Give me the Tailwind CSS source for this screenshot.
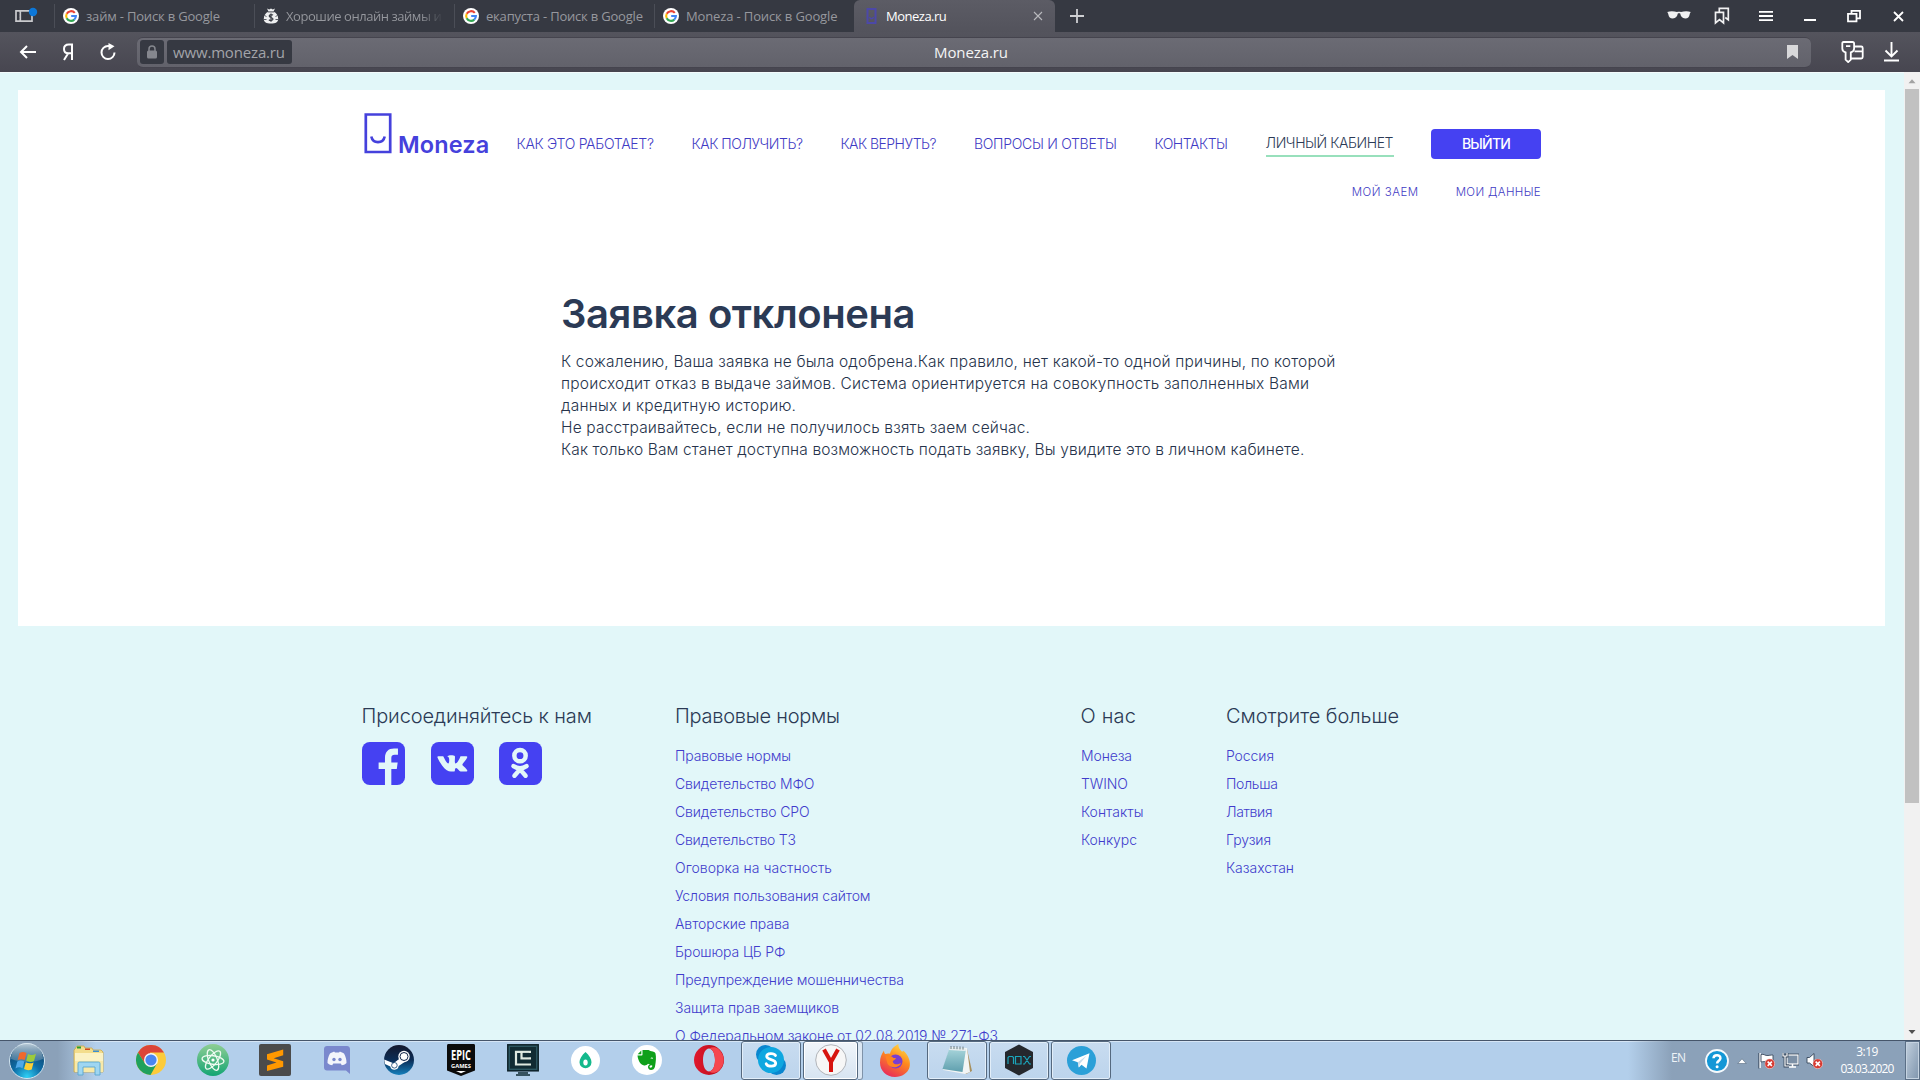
<!DOCTYPE html>
<html lang="ru">
<head>
<meta charset="utf-8">
<title>Moneza.ru</title>
<script src="https://cdn.jsdelivr.net/npm/@tailwindcss/browser@4"></script>
</head>
<body class="w-[1920px] h-[1080px] overflow-hidden flex flex-col bg-[#e2f7f9] font-['Inter',sans-serif]">

<!-- shared symbols -->
<svg class="hidden">
  <symbol id="google" viewBox="0 0 16 16">
    <circle cx="8" cy="8" r="8" fill="#fff"/>
    <g fill="none" stroke-width="2.1">
      <path d="M11.8 4.9A4.9 4.9 0 0 0 3.7 5.8" stroke="#ea4335"/>
      <path d="M3.75 5.7a4.9 4.9 0 0 0 0 4.6" stroke="#fbbc05"/>
      <path d="M3.7 10.2a4.9 4.9 0 0 0 7.6 1.4" stroke="#34a853"/>
      <path d="M8.2 8h4.7a4.9 4.9 0 0 1-1.7 3.7" stroke="#4285f4"/>
    </g>
  </symbol>
  <symbol id="denied" viewBox="0 0 10 10">
    <circle cx="5" cy="5" r="4.7" fill="#d63a32" stroke="#f3d5d3" stroke-width=".6"/>
    <path d="M3 3l4 4M7 3l-4 4" stroke="#fff" stroke-width="1.5"/>
  </symbol>
</svg>

<!-- tab strip -->
<div class="h-8 shrink-0 bg-[#363942] flex items-stretch font-['Open_Sans',sans-serif] text-[13px] text-[#96989e]">
  <div class="w-[54px] flex items-center pl-[14px]">
    <svg class="w-6 h-6" viewBox="0 0 24 24"><path d="M2 6.8h16v10.4H2zM6.3 7v10" fill="none" stroke="#c9cacd" stroke-width="1.7"/><path d="M3.2 9.5h2M3.2 12h2M3.2 14.500h2" stroke="#363942"/><circle cx="19" cy="8" r="4.2" fill="#0c77d8"/></svg>
  </div>
  <div class="w-[200px] flex items-center relative pl-[9px] gap-[7px]">
    <i class="absolute left-0 top-1 h-6 w-px bg-[#4b4e57]"></i>
    <svg class="w-4 h-4"><use href="#google"/></svg><span class="pt-px tracking-[-0.184px] whitespace-nowrap">займ - Поиск в Google</span>
  </div>
  <div class="w-[200px] flex items-center relative pl-[9px] gap-[7px]">
    <i class="absolute left-0 top-1 h-6 w-px bg-[#4b4e57]"></i>
    <svg class="w-4 h-4" viewBox="0 0 16 16"><path d="M4 .6l2.2 1L8 .4l1.800 1.200 2.200-1-1.500 3c3 1.500 4.700 4.400 4.700 7.200 0 3.400-2.500 4.800-7.200 4.800S.8 14.200.8 10.800c0-2.800 1.700-5.700 4.700-7.200z" fill="#eeeff0"/><path d="M4.800 3.900h6.400" stroke="#4a4d56"/><path d="M10 7.100C9 6.200 6.200 6.300 6.200 8c0 1.800 3.800 1.200 3.800 3.100 0 1.700-3 1.700-4.100.7M8 5.500v8.200" fill="none" stroke="#363942" stroke-width="1.200"/><path d="M1.500 7.500l2 1M1 11.500h2.500M14.500 7.500l-2 1M15 11.500h-2.500" stroke="#363942" stroke-width=".8"/></svg>
    <span class="pt-px tracking-[-0.45px] whitespace-nowrap w-[158px] overflow-hidden bg-gradient-to-r from-[#96989e] from-85% to-[#363942] bg-clip-text text-transparent">Хорошие онлайн займы и</span>
  </div>
  <div class="w-[200px] flex items-center relative pl-[9px] gap-[7px]">
    <i class="absolute left-0 top-1 h-6 w-px bg-[#4b4e57]"></i>
    <svg class="w-4 h-4"><use href="#google"/></svg><span class="pt-px tracking-[-0.199px] whitespace-nowrap">екапуста - Поиск в Google</span>
  </div>
  <div class="w-[200px] flex items-center relative pl-[9px] gap-[7px]">
    <i class="absolute left-0 top-1 h-6 w-px bg-[#4b4e57]"></i>
    <svg class="w-4 h-4"><use href="#google"/></svg><span class="pt-px tracking-[-0.136px] whitespace-nowrap">Moneza - Поиск в Google</span>
  </div>
  <div class="w-[201px] flex items-center rounded-t-[6px] bg-gradient-to-b from-[#5c5c65] to-[#53535c] pl-3 text-white">
    <svg class="w-[11px] h-4" viewBox="0 0 11 16"><path d="M1.500 1h8v14h-8z" fill="none" stroke="#4c48a8" stroke-width="2"/><path d="M3.500 9c1 2.300 3 2.300 4 0" fill="none" stroke="#4c48a8" stroke-width="1.500"/></svg>
    <span class="pt-px ml-[9px] w-[147px] tracking-[-0.5px]">Moneza.ru</span>
    <svg class="w-[10px] h-[10px]" viewBox="0 0 10 10"><path d="M1 1l8 8M9 1L1 9" stroke="#b9babe" stroke-width="1.100"/></svg>
  </div>
  <div class="flex items-center pl-[15px]">
    <svg class="w-[14px] h-[14px]" viewBox="0 0 14 14"><path d="M7 0v14M0 7h14" stroke="#cfd0d3" stroke-width="1.800"/></svg>
  </div>
  <div class="ml-auto flex items-center mr-[16px]">
    <svg class="w-6 h-6 mr-[22px]" viewBox="0 0 24 24"><path d="M.3 8c3-.9 6.600-.8 9.700.1 1.300-.4 2.700-.4 4 0 3.100-.9 6.700-1 9.700-.1-.3.900-.8 1.200-1 2.200-.6 3-1.800 4.300-4.500 4.300-3 0-4.500-1.800-5-4.900-.6-.4-1.800-.4-2.400 0-.5 3.100-2 4.900-5 4.900-2.700 0-3.900-1.300-4.500-4.300-.2-1-.7-1.300-1-2.200z" fill="#f1f1f2"/></svg>
    <svg class="w-[18px] h-[18px] mr-[28px]" viewBox="0 0 18 18" fill="none" stroke="#f1f1f2" stroke-width="1.700"><path d="M2.500 5.300h8v10.700l-4-3.300-4 3.300zM6.300 5V1.300h9v11.500l-3-2.300"/></svg>
    <svg class="w-[14px] h-4 mr-[31px]" viewBox="0 0 14 16"><path d="M0 3.800h14M0 8h14M0 12.200h14" stroke="#fff" stroke-width="1.800"/></svg>
    <svg class="w-3 h-4 mr-[31px]" viewBox="0 0 12 16"><path d="M0 12h12" stroke="#fff" stroke-width="2"/></svg>
    <svg class="w-[14px] h-[14px] mr-8" viewBox="0 0 14 14" fill="none" stroke="#fff" stroke-width="1.800"><path d="M1 4.800h8.500v7.500H1zM4.500 4.500V1.800H13v7.500H10"/></svg>
    <svg class="w-[11px] h-[11px]" viewBox="0 0 11 11"><path d="M1 1l9 9M10 1l-9 9" stroke="#fff" stroke-width="1.800"/></svg>
  </div>
</div>

<!-- address toolbar -->
<div class="h-10 shrink-0 bg-gradient-to-b from-[#54545d] to-[#474650] flex items-center font-['Open_Sans',sans-serif]">
  <div class="w-[137px] flex items-center pl-[19px] text-white">
    <svg class="w-[18px] h-[14px]" viewBox="0 0 18 14"><path d="M8 1L2 7l6 6M2 7h15" fill="none" stroke="#fff" stroke-width="2"/></svg>
    <svg class="w-3 h-[18px] ml-[25px]" viewBox="0 0 12 18"><path d="M10 17V1.500H6.800C3.500 1.500 2 3.500 2 6s1.500 4.300 4.300 4.300H10M6.200 10.300L2 17" fill="none" stroke="#fff" stroke-width="2"/></svg>
    <svg class="w-[18px] h-[18px] ml-[25px]" viewBox="0 0 18 18"><path d="M15.500 9.500A6.500 6.500 0 1 1 9 3h3.500" fill="none" stroke="#fff" stroke-width="2"/><path d="M9.500 0l6 3.300-6 4z" fill="#fff"/></svg>
  </div>
  <div class="w-[1674px] h-[31px] rounded-[6px] bg-gradient-to-b from-[#6b6b74] to-[#62626b] border-y border-[#45444e] flex items-center pl-[3px] pr-[13px] relative">
    <div class="w-6 h-6 rounded-[3px] bg-[#363942] flex items-center justify-center">
      <svg class="w-[10px] h-[14px]" viewBox="0 0 10 14"><path d="M2 6V4a3 3 0 0 1 6 0v2" fill="none" stroke="#85878e" stroke-width="1.500"/><rect y="5.500" width="10" height="8" rx="1.500" fill="#85878e"/></svg>
    </div>
    <div class="ml-[3px] w-[125px] h-6 rounded-[3px] bg-[#363942] flex items-center pl-[6px] text-[15px] tracking-[-0.165px] text-[#a2a4a9]">www.moneza.ru</div>
    <div class="ml-[642px] text-[15px] tracking-[-0.098px] text-[#f4f4f5]">Moneza.ru</div>
    <svg class="ml-auto w-[11px] h-[14px]" viewBox="0 0 11 14"><path d="M0 0h11v14l-5.500-4L0 14z" fill="#d8d8da"/></svg>
  </div>
  <svg class="ml-[30px] w-[23px] h-[22px]" viewBox="0 0 23 22" fill="none" stroke="#fff" stroke-width="1.800"><path d="M2.500 1h9c1 0 1.600.6 1.600 1.600v4.900c0 2-1.300 3.300-3.300 3.900v7.300l-2.600 2.400-2.600-2.400v-7.300C2.600 10.800 1.300 9.500 1.300 7.500V2.600C1.300 1.500 1.700 1 2.500 1zM5 5.200h4.300"/><path d="M13.500 5.500h6.700c1 0 1.500.5 1.500 1.500v9c0 1-.5 1.500-1.500 1.500H10M13.500 10.300h8"/></svg>
  <svg class="ml-[20px] w-[15px] h-[20px]" viewBox="0 0 15 20" fill="none" stroke="#fff" stroke-width="1.900"><path d="M7.500 0v14M1.500 8.500l6 6 6-6M0 18.500h15"/></svg>
</div>

<!-- viewport -->
<div class="h-[968px] shrink-0 flex overflow-hidden">
  <div class="w-[1904px] pt-[17px] border-t border-[#f3fbfc]">
    <main class="ml-[18px] w-[1867px] h-[536px] bg-white">
      <header class="flex h-[91px] pl-[346px]">
        <div class="flex items-end w-[152.500px] pb-[26px]">
          <svg class="w-7 h-[41px] mb-[1px]" viewBox="0 0 28 41" fill="none" stroke="#4541dc"><path d="M1.800 1.500h24.400v37.500H1.800z" stroke-width="2.700"/><path d="M7.300 23.500c1.500 7.500 11.900 7.500 13.400 0" stroke-width="2.600"/></svg>
          <span class="ml-[6px] text-[23.5px] leading-[24px] font-semibold tracking-[0.1px] text-[#4541dc] translate-y-[2px]">Moneza</span>
        </div>
        <div class="flex flex-col">
          <nav class="flex items-center h-[30px] mt-[39px] text-[14px] leading-[20px] font-light text-[#3f3bc4] whitespace-nowrap">
            <a class="w-[175px] tracking-[-0.288px]">КАК ЭТО РАБОТАЕТ?</a>
            <a class="w-[149px] tracking-[-0.461px]">КАК ПОЛУЧИТЬ?</a>
            <a class="w-[133.500px] tracking-[-0.543px]">КАК ВЕРНУТЬ?</a>
            <a class="w-[180.500px] tracking-[-0.296px]">ВОПРОСЫ И ОТВЕТЫ</a>
            <a class="w-[111px] tracking-[-0.475px]">КОНТАКТЫ</a>
            <span class="w-[165.500px]"><a class="block w-32 h-[26px] pt-[2px] border-b-2 border-[#98e0bc] tracking-[-0.428px] text-[#2b3a55]">ЛИЧНЫЙ КАБИНЕТ</a></span>
            <a class="w-[110px] h-[30px] rounded-[4px] bg-[#4541f2] text-white font-medium tracking-[-0.762px] flex items-center justify-center">ВЫЙТИ</a>
          </nav>
          <nav class="flex justify-end gap-[37px] mt-[24px] h-[18px] leading-[18px] text-[11.5px] font-light text-[#3f3bc4] whitespace-nowrap">
            <a class="tracking-[0.5px]">МОЙ ЗАЕМ</a>
            <a class="tracking-[0.349px]">МОИ ДАННЫЕ</a>
          </nav>
        </div>
      </header>
      <section class="ml-[543px] pt-[109px] text-[#2b3a55]">
        <h1 class="text-[40px] leading-[48px] font-semibold tracking-[-0.43px]">Заявка отклонена</h1>
        <p class="mt-[13px] text-[15.5px] leading-[22px] font-light whitespace-nowrap text-[#26334b]">
          <span class="tracking-[0.178px]">К сожалению, Ваша заявка не была одобрена.Как правило, нет какой-то одной причины, по которой</span><br>
          <span class="tracking-[0.204px]">происходит отказ в выдаче займов. Система ориентируется на совокупность заполненных Вами</span><br>
          <span class="tracking-[0.231px]">данных и кредитную историю.</span><br>
          <span class="tracking-[0.167px]">Не расстраивайтесь, если не получилось взять заем сейчас.</span><br>
          <span class="tracking-[0.123px]">Как только Вам станет доступна возможность подать заявку, Вы увидите это в личном кабинете.</span>
        </p>
      </section>
    </main>

    <footer class="flex items-start pl-[361px] pt-[77px] text-[14px] leading-7 font-light text-[#413ccc] whitespace-nowrap">
      <div class="w-[314px]">
        <h2 class="text-[20px] leading-[26px] tracking-[-0.13px] text-[#2b3a55] pl-[0.500px]">Присоединяйтесь к нам</h2>
        <div class="flex gap-[25px] mt-[13px] pl-px">
          <svg class="w-[43px] h-[43px]" viewBox="0 0 44 44"><rect width="44" height="44" rx="8" fill="#4541f2"/><path d="M23.500 44V27.500H17V21h6.500v-4.500c0-6.500 3.500-9.800 9.300-9.800h4V13h-3.300c-2.800 0-3.500 1.300-3.500 3.700V21H36.500l-.9 6.500H30V44z" fill="#e2f7f9"/></svg>
          <svg class="w-[43px] h-[43px] ml-px" viewBox="0 0 44 44"><rect width="44" height="44" rx="8" fill="#4541f2"/><path transform="translate(6.500 7.500) scale(1.280 1.200)" d="M13.162 18.994c.609 0 .858-.406.851-.915-.031-1.917.714-2.949 2.059-1.604 1.488 1.488 1.796 2.519 3.603 2.519h3.200c.808 0 1.126-.26 1.126-.668 0-.863-1.421-2.386-2.625-3.504-1.686-1.565-1.765-1.602-.313-3.486 1.801-2.339 4.157-5.336 2.073-5.336h-3.981c-.772 0-.828.435-1.103 1.083-.995 2.347-2.886 5.387-3.604 4.922-.751-.485-.407-2.406-.35-5.261.015-.754.011-1.271-1.141-1.539-.629-.145-1.241-.205-1.809-.205-2.273 0-3.841.953-2.950 1.119 1.571.293 1.420 3.692 1.054 5.160-.638 2.556-3.036-2.024-4.035-4.305-.241-.548-.315-.974-1.175-.974h-3.255c-.492 0-.787.16-.787.516 0 .602 2.960 6.720 5.786 9.770 2.756 2.975 5.480 2.708 7.376 2.708z" fill="#e2f7f9"/></svg>
          <svg class="w-[43px] h-[43px]" viewBox="0 0 44 44" fill="none" stroke="#e2f7f9" stroke-width="4.600" stroke-linecap="round" stroke-linejoin="round"><rect width="44" height="44" rx="8" fill="#4541f2" stroke="none"/><circle cx="21.500" cy="14" r="5.800"/><path d="M14.800 24.700c4.200 2.900 9.200 2.900 13.400 0M21.500 28l-5.700 6.500M21.500 28l5.700 6.500"/></svg>
        </div>
      </div>
      <div class="w-[406px]">
        <h2 class="text-[20px] leading-[26px] tracking-[-0.252px] text-[#2b3a55] mb-[13px]">Правовые нормы</h2>
        <ul>
          <li class="tracking-[-0.138px]">Правовые нормы</li>
          <li class="tracking-[-0.127px]">Свидетельство МФО</li>
          <li class="tracking-[-0.122px]">Свидетельство СРО</li>
          <li class="tracking-[-0.216px]">Свидетельство ТЗ</li>
          <li class="tracking-[0.041px]">Оговорка на частность</li>
          <li class="tracking-[-0.117px]">Условия пользования сайтом</li>
          <li class="tracking-[-0.056px]">Авторские права</li>
          <li class="tracking-[-0.112px]">Брошюра ЦБ РФ</li>
          <li class="tracking-[-0.125px]">Предупреждение мошенничества</li>
          <li class="tracking-[-0.094px]">Защита прав заемщиков</li>
          <li class="tracking-[-0.078px]">О Федеральном законе от 02.08.2019 № 271-ФЗ</li>
        </ul>
      </div>
      <div class="w-[145px]">
        <h2 class="text-[20px] leading-[26px] tracking-[0.215px] text-[#2b3a55] mb-[13px] -ml-[0.500px]">О нас</h2>
        <ul>
          <li class="tracking-[-0.131px]">Монеза</li>
          <li class="tracking-[-0.090px]">TWINO</li>
          <li>Контакты</li>
          <li class="tracking-[-0.068px]">Конкурс</li>
        </ul>
      </div>
      <div>
        <h2 class="text-[20px] leading-[26px] tracking-[-0.05px] text-[#2b3a55] mb-[13px]">Смотрите больше</h2>
        <ul>
          <li class="tracking-[-0.091px]">Россия</li>
          <li class="tracking-[-0.253px]">Польша</li>
          <li class="tracking-[-0.347px]">Латвия</li>
          <li class="tracking-[-0.100px]">Грузия</li>
          <li class="tracking-[-0.045px]">Казахстан</li>
        </ul>
      </div>
    </footer>
  </div>
  <div class="w-4 bg-[#f1f1f1] flex flex-col items-center">
    <svg class="w-4 h-[17px]" viewBox="0 0 16 16"><path d="M8 6.800l3.500 4h-7z" fill="#a3a3a3"/></svg>
    <div class="w-[14px] h-[714px] bg-[#c1c1c1]"></div>
    <svg class="w-4 h-4 mt-auto" viewBox="0 0 16 16"><path d="M8 10l3.500-4h-7z" fill="#505050"/></svg>
  </div>
</div>

<!-- taskbar -->
<div class="h-10 shrink-0 bg-[#b3cfeb] border-t border-[#46566b] flex items-stretch relative shadow-[inset_0_1px_0_#d5e5f5]">
  <div class="w-[96px] -mr-[38px] pl-2 flex items-center bg-gradient-to-r from-[#8ba1b9] from-60% to-[#8ba1b9]/0">
    <svg class="w-[38px] h-[38px]" viewBox="0 0 38 38">
      <defs><radialGradient id="orb" cx=".5" cy=".95" r=".9"><stop offset="0" stop-color="#2fd0f5"/><stop offset=".45" stop-color="#0d6ea8"/><stop offset="1" stop-color="#123f66"/></radialGradient><linearGradient id="shine" x2="0" y2="1"><stop stop-color="#dbe8f0" stop-opacity=".85"/><stop offset="1" stop-color="#7f9db4" stop-opacity=".4"/></linearGradient></defs>
      <circle cx="19" cy="19" r="17.500" fill="url(#orb)" stroke="#d3e4ef" stroke-width="1"/>
      <path d="M3 17a16 16 0 0 1 32 0c-9 4-22 4-32 0z" fill="url(#shine)"/>
      <path d="M11.500 11c2.500-1.300 4.500-1.300 7 .1l-1.800 7c-2.300-1.300-4.500-1.200-7 0z" fill="#f0692c"/>
      <path d="M20 12c2.500 1.400 5 1.300 8-.2l-2 7.200c-2.600 1.300-5.200 1.300-7.800-.2z" fill="#9ccb3c"/>
      <path d="M9.300 19.500c2.300-1.300 4.600-1.300 7 0l-1.800 6.800c-2.300-1.300-4.400-1.200-7 .1z" fill="#4fa8e8"/>
      <path d="M17.800 20.200c2.500 1.400 5 1.400 7.800.2l-1.900 7c-2.500 1.200-5 1.100-7.700-.3z" fill="#fccf35"/>
    </svg>
  </div>
  <div class="w-[62px] pb-px flex items-center justify-center z-10"><svg class="w-8 h-8" viewBox="0 0 32 32"><path d="M2 5l2-3h7l1 2h7l1 2h8l2 2v20H1V6z" fill="#f3dd8c" stroke="#c9a94e" stroke-width=".8"/><path d="M4 2.500h4v2H4z" fill="#2a9d2e"/><path d="M12 4.500h5v1.500h-5z" fill="#d1481f"/><path d="M20 6.500h6V8h-6z" fill="#3b8fd0"/><path d="M2 9h28v19H2z" fill="#f8e9a8"/><path d="M2 9h28v8H2z" fill="#fbf2c4"/><path d="M5 31V19.500c0-1 .5-1.500 1.500-1.500h19c1 0 1.500.5 1.500 1.500V31h-5v-8H10v8z" fill="#9fd6f1" stroke="#5aa6cf" stroke-width=".9"/></svg></div>
  <div class="w-[62px] pb-px flex items-center justify-center"><svg class="w-[30px] h-[30px]" viewBox="0 0 30 30"><circle cx="15" cy="15" r="15" fill="#fccb3a"/><path d="M2 7.500l7 11 6-3.500-1-7.500L28 7.500A15 15 0 0 0 2 7.500z" fill="#db4437"/><path d="M2 7.500A15 15 0 0 0 14.500 30l6.500-11.500-12 0z" fill="#1fa15d"/><circle cx="15" cy="15" r="7" fill="#f4f5f6"/><circle cx="15" cy="15" r="5.600" fill="#4a86f0"/></svg></div>
  <div class="w-[62px] pb-px flex items-center justify-center"><svg class="w-8 h-8" viewBox="0 0 32 32"><defs><linearGradient id="atom" x2="0" y2="1"><stop stop-color="#8fce94"/><stop offset="1" stop-color="#14a573"/></linearGradient></defs><circle cx="16" cy="16" r="16" fill="url(#atom)"/><g fill="none" stroke="#eefaf1" stroke-width="1.300"><ellipse cx="16" cy="16" rx="11" ry="4.300" transform="rotate(8 16 16)"/><ellipse cx="16" cy="16" rx="11" ry="4.300" transform="rotate(68 16 16)"/><ellipse cx="16" cy="16" rx="11" ry="4.300" transform="rotate(128 16 16)"/></g><circle cx="16" cy="16" r="1.600" fill="#fff"/></svg></div>
  <div class="w-[62px] pb-px flex items-center justify-center"><svg class="w-8 h-8" viewBox="0 0 32 32"><rect width="32" height="32" rx="2" fill="#4b4b4b"/><path d="M24.200 5.500v5.800l-9.500 3 9.500 2.900v5.500L8 27v-5.600l9.500-3L8 15.500v-5.200z" fill="#ff9800"/></svg></div>
  <div class="w-[62px] pb-px flex items-center justify-center"><svg class="w-[26px] h-7" viewBox="0 0 26 28"><path d="M3 0h20c1.700 0 3 1.300 3 3v25l-4-3.500H3c-1.700 0-3-1.300-3-3V3c0-1.700 1.300-3 3-3z" fill="#7a88cd"/><path d="M6 7.500c2-1.500 4-1.900 4.500-1.800l.4.900h4.200l.4-.9c.5-.1 2.500.3 4.500 1.800 1.700 3 2.600 6.200 2.500 9.500-1.600 1.700-3.300 2.200-4.700 2.200l-1.100-1.700H9.300l-1.100 1.700c-1.400 0-3.100-.5-4.700-2.200-.1-3.300.8-6.500 2.500-9.500z" fill="#f4f5fb"/><circle cx="10" cy="13.500" r="1.700" fill="#7a88cd"/><circle cx="16" cy="13.500" r="1.700" fill="#7a88cd"/></svg></div>
  <div class="w-[62px] pb-px flex items-center justify-center"><svg class="w-[30px] h-[30px]" viewBox="0 0 30 30"><defs><linearGradient id="steam" x2="0" y2="1"><stop stop-color="#14172c"/><stop offset=".5" stop-color="#0b2d56"/><stop offset="1" stop-color="#1480bd"/></linearGradient></defs><circle cx="15" cy="15" r="15" fill="url(#steam)"/><path d="M.2 14.500l9.300 3.800 6-4.500 5.500 3-6.300 4.200a4.300 4.300 0 0 1-8.400.5L.9 19z" fill="#fff"/><circle cx="20" cy="11.500" r="5.700" fill="#fff"/><circle cx="20" cy="11.500" r="4" fill="none" stroke="#12264a" stroke-width="1"/><circle cx="10.400" cy="20.300" r="2.800" fill="none" stroke="#12446f" stroke-width=".8"/></svg></div>
  <div class="w-[62px] pb-px flex items-center justify-center"><svg class="w-7 h-8 overflow-visible" viewBox="0 0 28 32"><path d="M1.500 0h25c1 0 1.500.6 1.500 1.500v25L14 32 0 26.500v-25C0 .6.500 0 1.500 0z" fill="#0b0b0b"/><text x="14" y="15.500" text-anchor="middle" textLength="20" lengthAdjust="spacingAndGlyphs" font-family="Open Sans" font-weight="700" font-size="15" fill="#fff">EPIC</text><text x="14" y="23.500" text-anchor="middle" textLength="20" lengthAdjust="spacingAndGlyphs" font-family="Open Sans" font-weight="700" font-size="6" fill="#fff">GAMES</text><path d="M9 27h10l-5 2.300z" fill="#fff"/></svg></div>
  <div class="w-[62px] pb-px flex items-center justify-center"><svg class="w-8 h-8" viewBox="0 0 32 32"><rect x=".8" y=".8" width="30.400" height="26" fill="#2c5660" stroke="#0d2229" stroke-width="1.500"/><rect x="3" y="3" width="26" height="21.600" fill="#112b33"/><path d="M24 7.800H9v12.700h15M14.500 8v6.300H24" fill="none" stroke="#dfe9e0" stroke-width="2.200"/><path d="M16 8.900h6v4.200h-6z" fill="#112b33"/><path d="M11 29h10M9 31h14" stroke="#112b33" stroke-width="1.600"/></svg></div>
  <div class="w-[62px] pb-px flex items-center justify-center"><svg class="w-[29px] h-[29px]" viewBox="0 0 29 29"><circle cx="14.500" cy="14.500" r="14.500" fill="#fff"/><path d="M14.500 6c3.800 3.500 6 6.900 6 10.200a6 6 0 0 1-12 0c0-3.300 2.200-6.700 6-10.200z" fill="#14b98c"/><ellipse cx="14.500" cy="16.500" rx="2.200" ry="3" fill="#fff"/></svg></div>
  <div class="w-[62px] pb-px flex items-center justify-center"><svg class="w-[30px] h-[30px]" viewBox="0 0 30 30"><circle cx="15" cy="15" r="15" fill="#fff"/><path d="M10.500 5h6c1 .5 1.500 1 3 1.300 2 .4 3.500.7 4 2.200.8 3.500.5 8-.5 13-.5 2.500-2 3.500-4 3.500s-3-1.500-3-3 1-2.500 2.500-2.500v1.600c-.8 0-1.200.5-.9 1.200.8.8 2.600.4 2.800-1.500-1.500-.8-3-1-4.400-2-1 1.500-3 2-4.500 1.500C8 19.500 6 15 5.500 10.500h4.200c.6 0 .8-.3.800-.9z" fill="#0fa01a"/><path d="M5.700 9.300L9.300 5.500v3.800z" fill="#0fa01a"/><path d="M18.500 13.700c.3-1.500 2.300-1.500 2.600.2-1-.3-1.700-.4-2.600-.2z" fill="#fff"/></svg></div>
  <div class="w-[62px] pb-px flex items-center justify-center"><svg class="w-[30px] h-[30px]" viewBox="0 0 30 30"><defs><linearGradient id="opera"><stop stop-color="#e0182d"/><stop offset="1" stop-color="#b30a18"/></linearGradient></defs><path fill-rule="evenodd" d="M15 0a15 15 0 1 0 0 30 15 15 0 0 0 0-30zm0 3.500c3.500 0 6 5 6 11.500s-2.500 11.500-6 11.500S9 21.500 9 15 11.500 3.500 15 3.500z" fill="url(#opera)"/><path d="M15 3.500c3.500 0 6 5 6 11.500s-2.500 11.500-6 11.500c3 2 7 1.500 9.500-.5 7-6 7-16 0-22C22 1.800 18 1.500 15 3.500z" fill="#f5474f"/></svg></div>
  <div class="w-[63px] flex items-center justify-center pr-px"><div class="w-[60px] h-[39px] rounded-[3px] border border-[#55697f] bg-gradient-to-b from-[#c8dcf0] to-[#bcd4ec] shadow-[inset_0_0_0_1px_#e2eef9] flex items-center justify-center pb-px"><svg class="w-[30px] h-[30px]" viewBox="0 0 30 30"><circle cx="9.500" cy="9.500" r="9.500" fill="#0a86cf"/><circle cx="20.500" cy="20.500" r="9.500" fill="#0a86cf"/><circle cx="15" cy="15" r="13" fill="#0fa7e0"/><path d="M19.500 10.500c-1.500-2.700-8.800-2.700-8.800.8 0 4.200 9 2.500 9 7 0 3.900-8 3.600-9.500.5" fill="none" stroke="#fff" stroke-width="2.800" stroke-linecap="round"/></svg></div></div>
  <div class="w-[61px] flex items-center"><div class="w-[55px] h-[39px] rounded-[3px] border border-[#55697f] bg-gradient-to-b from-[#f0f5fa] to-[#d7e4f1] shadow-[inset_0_0_0_1px_#fff] flex items-center justify-center pb-px"><svg class="w-8 h-8" viewBox="0 0 32 32"><circle cx="16" cy="16" r="15.300" fill="#f7f7f7" stroke="#a9adb2" stroke-width=".9"/><path d="M16 28V17.500M16 18L9 5.500M16 18l7-12.500" fill="none" stroke="#d7140f" stroke-width="4"/></svg></div><div class="w-[5px] h-[39px] rounded-r-[3px] border-y border-r border-[#7f93a9] bg-[#dbe7f3]"></div></div>
  <div class="w-[62px] flex items-center justify-center"><svg class="w-8 h-[39px]" viewBox="0 0 32 39"><defs><linearGradient id="fox" x1=".8" x2=".3" y2="1"><stop stop-color="#ffe14a"/><stop offset=".45" stop-color="#ff8a1d"/><stop offset="1" stop-color="#e82a5c"/></linearGradient></defs><path d="M19.500 3c-.5 3 1 5 3 7.300 1 .5 1.500.3 2-.5 5 4.500 7.500 11 6 16.500C29 32 23 36 16 36 7 36 1 29.500 1 21.500 1 16.500 2.500 13 5 9.500c0 1.500.3 2.500 1.200 3.600C8 12.500 9.500 12.300 11 12.700 12 8 15.500 5 19.500 3z" fill="url(#fox)"/><circle cx="16.500" cy="20.500" r="7" fill="#7a3ed0"/><path d="M6.500 15.500c3-1.500 6-.5 8 1.500h2.500c-.5 2-3 2.300-3.300 3.500.8 3.500 5.800 3.500 8.300 1.300-1 5-10 6.500-13.500 1z" fill="#ff8420"/></svg></div>
  <div class="w-[62px] flex items-center justify-center"><div class="w-[60px] h-[39px] rounded-[3px] border border-[#55697f] bg-gradient-to-b from-[#c8dcf0] to-[#bcd4ec] shadow-[inset_0_0_0_1px_#e2eef9] flex items-center justify-center pb-px"><svg class="w-8 h-8" viewBox="0 0 32 32"><defs><linearGradient id="pad" x2="0" y2="1"><stop stop-color="#a9d6dc"/><stop offset="1" stop-color="#5f9fae"/></linearGradient></defs><path d="M26 5l5 22-6 3-4-3z" fill="#a78f5c"/><path d="M9 3l17 1 3 24-5 2L2 26z" fill="#f2f5f5"/><path d="M8.500 4L25 5l-3.500 23L1.500 25z" fill="url(#pad)"/><path d="M8.500 4L25 5l-.3 2L8 6z" fill="#e9eef0"/><path d="M10 2v3M13 2v3M16 2.200v3M19 2.400v3M22 2.600v3" stroke="#6d7b80" stroke-width="1"/></svg></div></div>
  <div class="w-[62px] flex items-center justify-center"><div class="w-[60px] h-[39px] rounded-[3px] border border-[#55697f] bg-gradient-to-b from-[#c8dcf0] to-[#bcd4ec] shadow-[inset_0_0_0_1px_#e2eef9] flex items-center justify-center pb-px"><svg class="w-[30px] h-[32px]" viewBox="0 0 30 32"><path d="M15 .5L29 8v16l-14 7.500L1 24V8z" fill="#25282d"/><path d="M4 20v-6.500l1-1h3.500l1 1V20M11.500 12.500H17V20h-5.500zM19 12.500h1.500L25.500 20H27M19 20h1.500l5-7.500H27" fill="none" stroke="#1ba5bb" stroke-width="1.200"/></svg></div></div>
  <div class="w-[62px] flex items-center justify-center"><div class="w-[60px] h-[39px] rounded-[3px] border border-[#55697f] bg-gradient-to-b from-[#c8dcf0] to-[#bcd4ec] shadow-[inset_0_0_0_1px_#e2eef9] flex items-center justify-center pb-px"><svg class="w-[29px] h-[29px]" viewBox="0 0 29 29"><circle cx="14.500" cy="14.500" r="14.500" fill="#2ba0d8"/><path d="M5 14.300l17.500-7-3 15.200-5-3.800-2.700 2.800-1-5.200z" fill="#fff"/><path d="M10.800 16.300l8.700-6.500-6.500 7.700-1.200 4z" fill="#c7dceb"/></svg></div></div>

  <!-- notification area -->
  <div class="ml-auto w-[292px] flex items-center bg-gradient-to-r from-[#8ba1b9]/0 to-[#8ba1b9] to-15% text-white font-['Open_Sans',sans-serif] text-[12px]">
    <span class="ml-[43px] w-[26px] tracking-[-0.703px] text-[#eef3f8] -translate-y-[3px]">EN</span>
    <svg class="ml-[8px] w-6 h-6" viewBox="0 0 24 24"><circle cx="12" cy="12" r="11" fill="#1497d6" stroke="#f6fafd" stroke-width="1.800"/><path d="M8.500 9.300C8.700 5 15.700 5.300 15.400 9.300c-.2 2.300-3.300 2.600-3.300 5.200" fill="none" stroke="#fff" stroke-width="2.500"/><circle cx="12.100" cy="17.700" r="1.500" fill="#fff"/></svg>
    <svg class="ml-[8px] w-[10px] h-[8px]" viewBox="0 0 10 8"><path d="M.8 6.500L5 1.800l4.200 4.700z" fill="#fff" stroke="#55697f" stroke-width=".6"/></svg>
    <svg class="ml-[11px] w-[17px] h-[17px]" viewBox="0 0 17 17"><path d="M2 1v15" stroke="#fff" stroke-width="1.600"/><path d="M.8 1v15.500" stroke="#3a4a5d" stroke-width=".9"/><path d="M3 2.500c3-1 4 1.500 7 1s4-.5 5-.5v7c-3 .8-4 .5-6 0s-4-.5-6 0z" fill="#fff" stroke="#3a4a5d" stroke-width=".9"/><svg x="6.500" y="6.500" width="10.500" height="10.500"><use href="#denied"/></svg></svg>
    <svg class="ml-[7px] w-[17px] h-[17px]" viewBox="0 0 17 17"><rect x="5" y="3" width="11" height="9" fill="#8296ab" stroke="#34455a" stroke-width="2.800"/><rect x="5" y="3" width="11" height="9" fill="#7c90a6" stroke="#fff" stroke-width="1.200"/><path d="M7 15h7M10.500 12v3" stroke="#fff" stroke-width="1.500"/><path d="M1 1v3h4V1M3 4v10h4" fill="none" stroke="#34455a" stroke-width="2.800"/><path d="M1 1v3h4V1M3 4v10h4" fill="none" stroke="#fff" stroke-width="1.200"/></svg>
    <svg class="ml-[7px] w-[17px] h-[17px]" viewBox="0 0 17 17"><path d="M1 5.500h2.500L8 1.500v13L3.500 11H1z" fill="#fff" stroke="#34455a" stroke-width=".9"/><svg x="6.500" y="6.500" width="10.500" height="10.500"><use href="#denied"/></svg></svg>
    <div class="ml-auto mr-[11px] w-[54px] flex flex-col items-center text-[12px] leading-[17px] whitespace-nowrap pb-px"><span class="tracking-[-0.6px]">3:19</span><span class="tracking-[-0.8px]">03.03.2020</span></div>
    <div class="w-[15px] self-stretch border border-[#5b6f86] bg-gradient-to-br from-[#c2d0de] to-[#7f95ad] shadow-[inset_0_0_0_1px_#c5d3e1]"></div>
  </div>
</div>
</body>
</html>
